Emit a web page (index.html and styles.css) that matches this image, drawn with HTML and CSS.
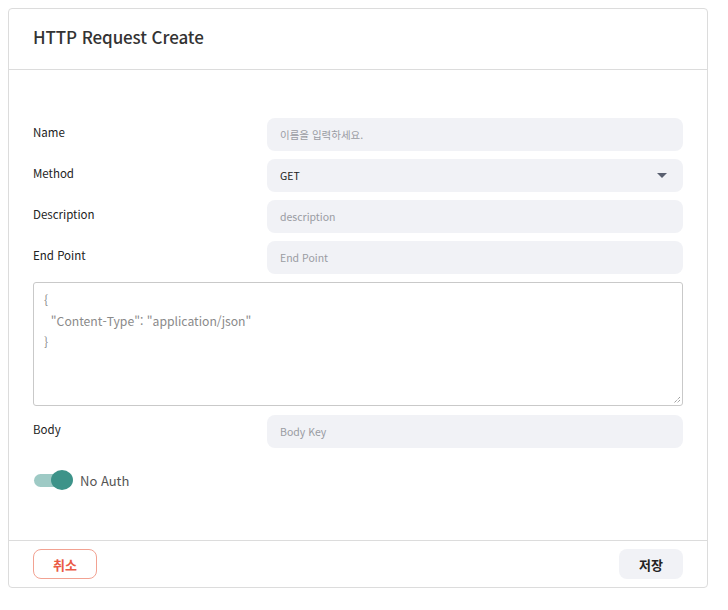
FILE: index.html
```html
<!DOCTYPE html>
<html lang="ko">
<head>
<meta charset="utf-8">
<link rel="stylesheet" href="styles.css">
</head>
<body>
<div class="card">
  <div class="header"><h1 class="title">HTTP Request Create</h1></div>
  <div class="content">
    <div class="row">
      <label class="label">Name</label>
      <div class="field placeholder">이름을 입력하세요.</div>
    </div>
    <div class="row">
      <label class="label">Method</label>
      <div class="field select"><span class="value">GET</span><span class="caret"></span></div>
    </div>
    <div class="row">
      <label class="label">Description</label>
      <div class="field placeholder">description</div>
    </div>
    <div class="row">
      <label class="label">End Point</label>
      <div class="field placeholder">End Point</div>
    </div>
    <div class="textarea">
      <div class="code">{</div>
      <div class="code">&nbsp;&nbsp;"Content-Type": "application/json"</div>
      <div class="code">}</div>
      <svg class="grip" width="8" height="8" viewBox="0 0 8 8"><path d="M7 1 L1 7 M7 4 L4 7" stroke="#777" stroke-width="1" stroke-dasharray="1 1"/></svg>
    </div>
    <div class="row">
      <label class="label">Body</label>
      <div class="field placeholder">Body Key</div>
    </div>
    <div class="toggle-row">
      <span class="toggle"><span class="track"></span><span class="thumb"></span></span>
      <span class="toggle-label">No Auth</span>
    </div>
  </div>
  <div class="footer">
    <button class="btn cancel">취소</button>
    <button class="btn save">저장</button>
  </div>
</div>
</body>
</html>
```

FILE: styles.css
```css
* { box-sizing: border-box; }
html, body { margin: 0; padding: 0; background: #fff; }
body {
  padding: 8px;
  font-family: "Noto Sans CJK KR", "Noto Sans", sans-serif;
  color: #222;
}
.card {
  width: 700px;
  height: 580px;
  border: 1px solid #dcdcdc;
  border-radius: 4px;
  display: flex;
  flex-direction: column;
}
.header {
  height: 61px;
  border-bottom: 1px solid #dcdcdc;
  display: flex;
  align-items: center;
  padding-left: 24px;
  padding-bottom: 5px;
}
.title {
  margin: 0;
  font-size: 17px;
  font-weight: 500;
  color: #333;
  letter-spacing: -0.1px;
}
.content {
  flex: 1;
  padding: 48px 24px 0 24px;
  display: flex;
  flex-direction: column;
}
.row {
  display: flex;
  align-items: flex-start;
  margin-bottom: 8px;
}
.label {
  width: 234px;
  font-size: 11.5px;
  color: #222;
  line-height: 16px;
  padding-top: 6px;
}
.field {
  flex: 1;
  height: 33px;
  background: #f1f2f6;
  border-radius: 8px;
  padding: 0 13px 1px 13px;
  display: flex;
  align-items: center;
  font-size: 10.5px;
}
.placeholder { color: #9a9ca3; }
.select { justify-content: space-between; color: #222; padding-right: 16px; }
.caret {
  width: 0; height: 0;
  border-left: 5px solid transparent;
  border-right: 5px solid transparent;
  border-top: 5px solid #5a6070;
}
.textarea {
  position: relative;
  height: 124px;
  border: 1px solid #c9c9c9;
  border-radius: 3px;
  padding: 7px 10px;
  margin-bottom: 9px;
}
.code {
  font-size: 12.2px;
  line-height: 21px;
  color: #8a8a8a;
  white-space: pre;
}
.grip { position: absolute; right: 1px; bottom: 1px; }
.toggle-row {
  display: flex;
  align-items: center;
  margin-top: 14px;
}
.toggle {
  position: relative;
  width: 42px;
  height: 20px;
  display: inline-block;
}
.track {
  position: absolute;
  left: 1px; top: 4px;
  width: 38px; height: 13px;
  border-radius: 7px;
  background: #9ecac5;
}
.thumb {
  position: absolute;
  left: 18px; top: 0;
  width: 22px; height: 20px;
  border-radius: 50%;
  background: #3d9389;
}
.toggle-label {
  margin-left: 5px;
  font-size: 13px;
  color: #555;
}
.footer {
  height: 47px;
  border-top: 1px solid #dcdcdc;
  display: flex;
  justify-content: space-between;
  align-items: flex-start;
  padding: 8px 24px 0 24px;
}
.btn {
  width: 64px;
  height: 30px;
  border-radius: 8px;
  font-family: "Noto Sans CJK KR", "Noto Sans", sans-serif;
  font-size: 13px;
  font-weight: 700;
  cursor: pointer;
}
.cancel {
  background: #fff;
  border: 1px solid #f2a292;
  color: #ea5a45;
}
.save {
  background: #f1f2f6;
  border: none;
  color: #222;
}
```
